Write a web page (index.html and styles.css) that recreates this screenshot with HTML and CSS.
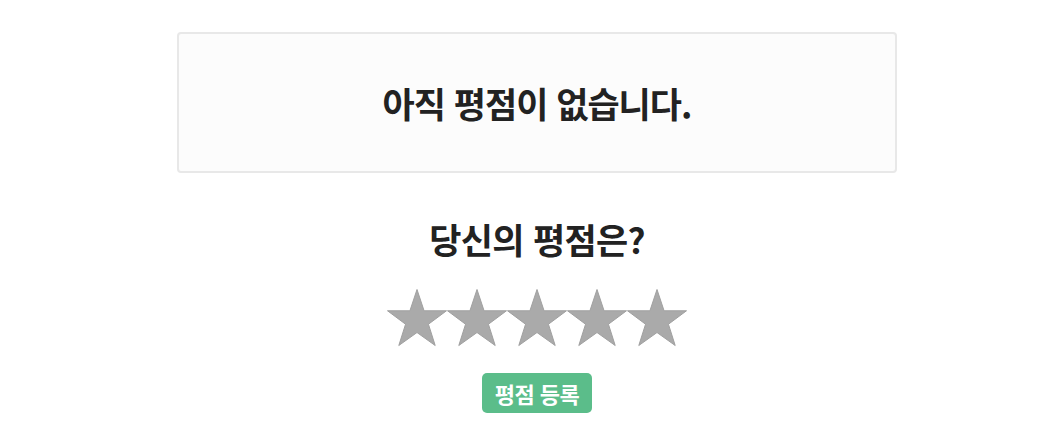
FILE: index.html
```html
<!DOCTYPE html>
<html lang="ko">
<head>
    <meta charset="UTF-8">
    <meta name="viewport" content="width=device-width, initial-scale=1.0">
    <title>평점</title>
    <link rel="stylesheet" href="styles.css">
</head>
<body>

<div class="rating-wrap">
    <div class="rating-summary">
        <h2>아직 평점이 없습니다.</h2>
    </div>

    <h3 class="rating-question">당신의 평점은?</h3>

    <div class="stars">
        <svg class="star" viewBox="0 0 60 58"><polygon points="30,0.5 37.07,21.77 59.5,21.77 41.44,35.22 48.2,56.5 30,43.53 11.8,56.5 18.56,35.22 0.5,21.77 22.93,21.77"/></svg>
        <svg class="star" viewBox="0 0 60 58"><polygon points="30,0.5 37.07,21.77 59.5,21.77 41.44,35.22 48.2,56.5 30,43.53 11.8,56.5 18.56,35.22 0.5,21.77 22.93,21.77"/></svg>
        <svg class="star" viewBox="0 0 60 58"><polygon points="30,0.5 37.07,21.77 59.5,21.77 41.44,35.22 48.2,56.5 30,43.53 11.8,56.5 18.56,35.22 0.5,21.77 22.93,21.77"/></svg>
        <svg class="star" viewBox="0 0 60 58"><polygon points="30,0.5 37.07,21.77 59.5,21.77 41.44,35.22 48.2,56.5 30,43.53 11.8,56.5 18.56,35.22 0.5,21.77 22.93,21.77"/></svg>
        <svg class="star" viewBox="0 0 60 58"><polygon points="30,0.5 37.07,21.77 59.5,21.77 41.44,35.22 48.2,56.5 30,43.53 11.8,56.5 18.56,35.22 0.5,21.77 22.93,21.77"/></svg>
    </div>

    <button class="rate-btn">평점 등록</button>
</div>

</body>
</html>
```

FILE: styles.css
```css
body {
    margin: 0;
    padding: 32px 0 0 16px;
    background-color: #ffffff;
    color: #222222;
    font-family: "Noto Sans CJK KR", "Noto Sans", sans-serif;
}

.rating-wrap {
    display: flex;
    flex-direction: column;
    align-items: center;
}

.rating-summary {
    box-sizing: border-box;
    width: 720px;
    height: 141px;
    background-color: #fcfcfc;
    border: 2px solid #e8e8e8;
    border-radius: 4px;
    display: flex;
    align-items: center;
    justify-content: center;
}

.rating-summary h2 {
    margin: 0;
    font-size: 35px;
    font-weight: 700;
    letter-spacing: -1px;
}

.rating-question {
    margin: 42px 0 0;
    font-size: 35px;
    font-weight: 700;
    letter-spacing: -0.7px;
    line-height: 48px;
}

.stars {
    display: flex;
    margin-top: 26px;
}

.star {
    width: 60px;
    height: 58px;
    fill: #aaaaaa;
    stroke: #a0a0a0;
    stroke-width: 1;
}

.rate-btn {
    margin-top: 26px;
    padding: 0 13px;
    height: 40px;
    border: none;
    border-radius: 5px;
    background-color: #5bbd8a;
    color: #ffffff;
    font-family: "Noto Sans CJK KR", "Noto Sans", sans-serif;
    font-size: 22px;
    font-weight: 700;
    letter-spacing: -0.5px;
    cursor: pointer;
}
```
